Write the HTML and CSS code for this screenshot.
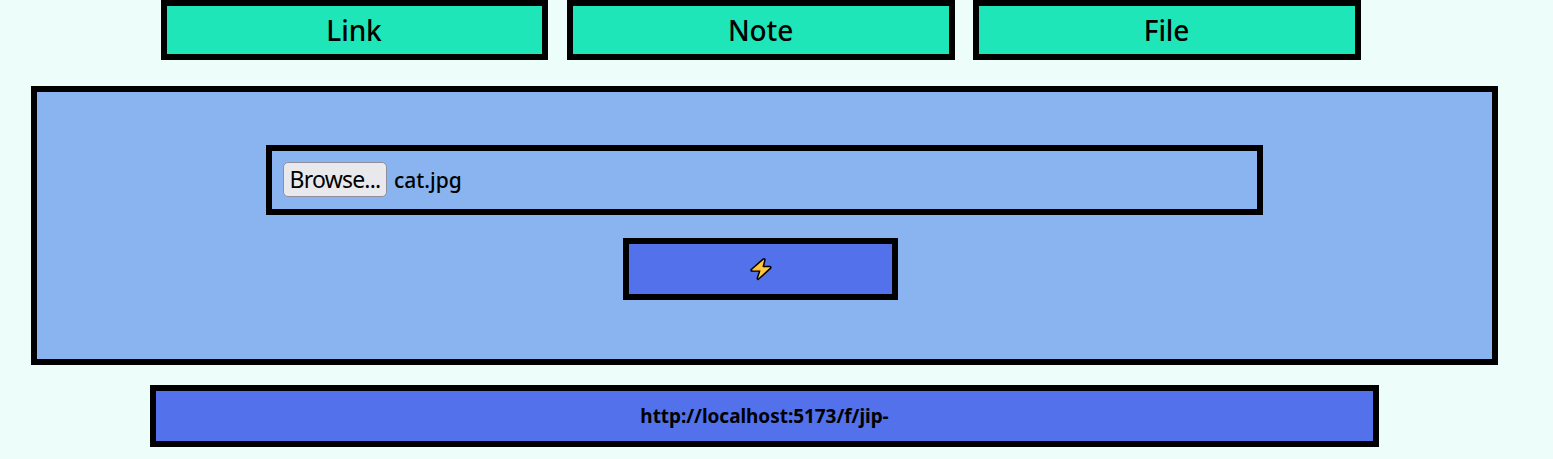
FILE: index.html
```html
<!DOCTYPE html>
<html lang="en">
<head>
<meta charset="utf-8">
<title>Share a file</title>
<link rel="stylesheet" href="styles.css">
</head>
<body>
<nav class="tabs">
  <button class="box tab tab-link"><span>Link</span></button>
  <button class="box tab"><span>Note</span></button>
  <button class="box tab"><span>File</span></button>
</nav>
<main class="box panel">
  <div class="box picker">
    <button class="browse"><span>Browse...</span></button>
    <span class="filename">cat.jpg</span>
  </div>
  <button class="box submit" aria-label="Upload">
    <svg class="bolt" viewBox="0 0 24 24"><path d="M14.4 1.9 2 12.7l.3 1.4h8.4L8.2 21.4l.9 1.1L21.9 10.9l-.4-1.4h-7.2l1.7-6.9-.4-.7z" fill="#ffc83d" stroke="#000" stroke-width="1.5" stroke-linejoin="round"/><path d="M4 13.2h7.8l-.5 1.8" fill="none" stroke="#e8912d" stroke-width=".7"/></svg>
  </button>
</main>
<div class="box result"><span class="url">http://localhost:5173/f/jip-</span></div>
</body>
</html>
```
FILE: styles.css
```css
* { box-sizing: border-box; }
body {
  margin: 0;
  height: 459px;
  overflow: hidden;
  background: #edfdfa;
  color: #000;
  font-family: "Noto Sans", sans-serif;
}
button {
  margin: 0;
  padding: 0;
  color: inherit;
  font-family: inherit;
}
.box {
  display: flex;
  align-items: center;
  justify-content: center;
  border: 6px solid #000;
}
.tabs {
  display: grid;
  grid-template-columns: repeat(3, 388px);
  column-gap: 18px;
  height: 60px;
  margin-left: 161px;
}
.tab {
  padding: 0 1px 1px 0;
  background: #1ee6b9;
  font-size: 28px;
  font-weight: 500;
  line-height: 38px;
  letter-spacing: -0.1px;
}
.tab-link { width: 387px; }
.panel {
  flex-direction: column;
  justify-content: flex-start;
  width: 1467px;
  height: 279px;
  margin: 26px 0 0 31px;
  padding-top: 53px;
  background: #89b4f0;
}
.picker {
  justify-content: flex-start;
  width: 997px;
  height: 70px;
  padding: 0 11px 1px;
}
.browse {
  width: 104px;
  height: 35px;
  padding: 0 0 1px;
  border: 1px solid #8f8f9d;
  border-radius: 5px;
  background: #e9e9ed;
  font-size: 23px;
  line-height: 32px;
  letter-spacing: -0.8px;
}
.filename {
  margin: 0 0 0 7px;
  font-size: 21px;
  font-weight: 500;
  line-height: 28px;
}
.submit {
  width: 275px;
  height: 62px;
  margin: 23px 8px 0 0;
  background: #5271eb;
}
.bolt {
  width: 24px;
  height: 24px;
}
.result {
  width: 1229px;
  height: 62px;
  margin: 20px 0 0 150px;
  background: #5271eb;
}
.url {
  font-size: 19px;
  font-weight: 700;
  line-height: 26px;
  letter-spacing: -0.05px;
}
```
